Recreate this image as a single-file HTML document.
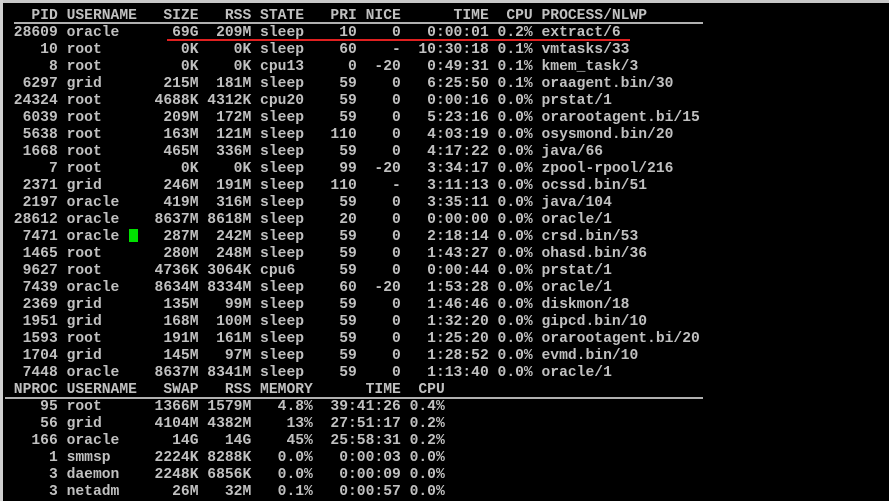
<!DOCTYPE html>
<html><head><meta charset="utf-8"><style>
html,body{margin:0;padding:0;background:#000;width:889px;height:501px;overflow:hidden;position:relative}
pre{position:absolute;left:5px;top:8px;margin:0;font-family:"Liberation Mono",monospace;font-size:14.67px;line-height:17px;color:#c0c0c0;font-weight:bold;letter-spacing:0}
.l{position:absolute;background:#b0b0b0;height:2px}
</style></head><body>
<div style="position:absolute;left:0;top:0;width:889px;height:3px;background:#c8c8c8"></div>
<div style="position:absolute;left:0;top:0;width:3px;height:501px;background:#d0d0d0"></div>
<div class="l" style="left:14px;top:22px;width:689px"></div>
<div class="l" style="left:5px;top:397px;width:698px"></div>
<div style="position:absolute;left:167px;top:39px;width:463px;height:2px;background:#e02020"></div>
<div style="position:absolute;left:129px;top:229px;width:9px;height:13px;background:#00e000"></div>
<pre>   PID USERNAME   SIZE   RSS STATE   PRI NICE      TIME  CPU PROCESS/NLWP
 28609 oracle      69G  209M sleep    10    0   0:00:01 0.2% extract/6
    10 root         0K    0K sleep    60    -  10:30:18 0.1% vmtasks/33
     8 root         0K    0K cpu13     0  -20   0:49:31 0.1% kmem_task/3
  6297 grid       215M  181M sleep    59    0   6:25:50 0.1% oraagent.bin/30
 24324 root      4688K 4312K cpu20    59    0   0:00:16 0.0% prstat/1
  6039 root       209M  172M sleep    59    0   5:23:16 0.0% orarootagent.bi/15
  5638 root       163M  121M sleep   110    0   4:03:19 0.0% osysmond.bin/20
  1668 root       465M  336M sleep    59    0   4:17:22 0.0% java/66
     7 root         0K    0K sleep    99  -20   3:34:17 0.0% zpool-rpool/216
  2371 grid       246M  191M sleep   110    -   3:11:13 0.0% ocssd.bin/51
  2197 oracle     419M  316M sleep    59    0   3:35:11 0.0% java/104
 28612 oracle    8637M 8618M sleep    20    0   0:00:00 0.0% oracle/1
  7471 oracle     287M  242M sleep    59    0   2:18:14 0.0% crsd.bin/53
  1465 root       280M  248M sleep    59    0   1:43:27 0.0% ohasd.bin/36
  9627 root      4736K 3064K cpu6     59    0   0:00:44 0.0% prstat/1
  7439 oracle    8634M 8334M sleep    60  -20   1:53:28 0.0% oracle/1
  2369 grid       135M   99M sleep    59    0   1:46:46 0.0% diskmon/18
  1951 grid       168M  100M sleep    59    0   1:32:20 0.0% gipcd.bin/10
  1593 root       191M  161M sleep    59    0   1:25:20 0.0% orarootagent.bi/20
  1704 grid       145M   97M sleep    59    0   1:28:52 0.0% evmd.bin/10
  7448 oracle    8637M 8341M sleep    59    0   1:13:40 0.0% oracle/1
 NPROC USERNAME   SWAP   RSS MEMORY      TIME  CPU
    95 root      1366M 1579M   4.8%  39:41:26 0.4%
    56 grid      4104M 4382M    13%  27:51:17 0.2%
   166 oracle      14G   14G    45%  25:58:31 0.2%
     1 smmsp     2224K 8288K   0.0%   0:00:03 0.0%
     3 daemon    2248K 6856K   0.0%   0:00:09 0.0%
     3 netadm      26M   32M   0.1%   0:00:57 0.0%</pre>
</body></html>
